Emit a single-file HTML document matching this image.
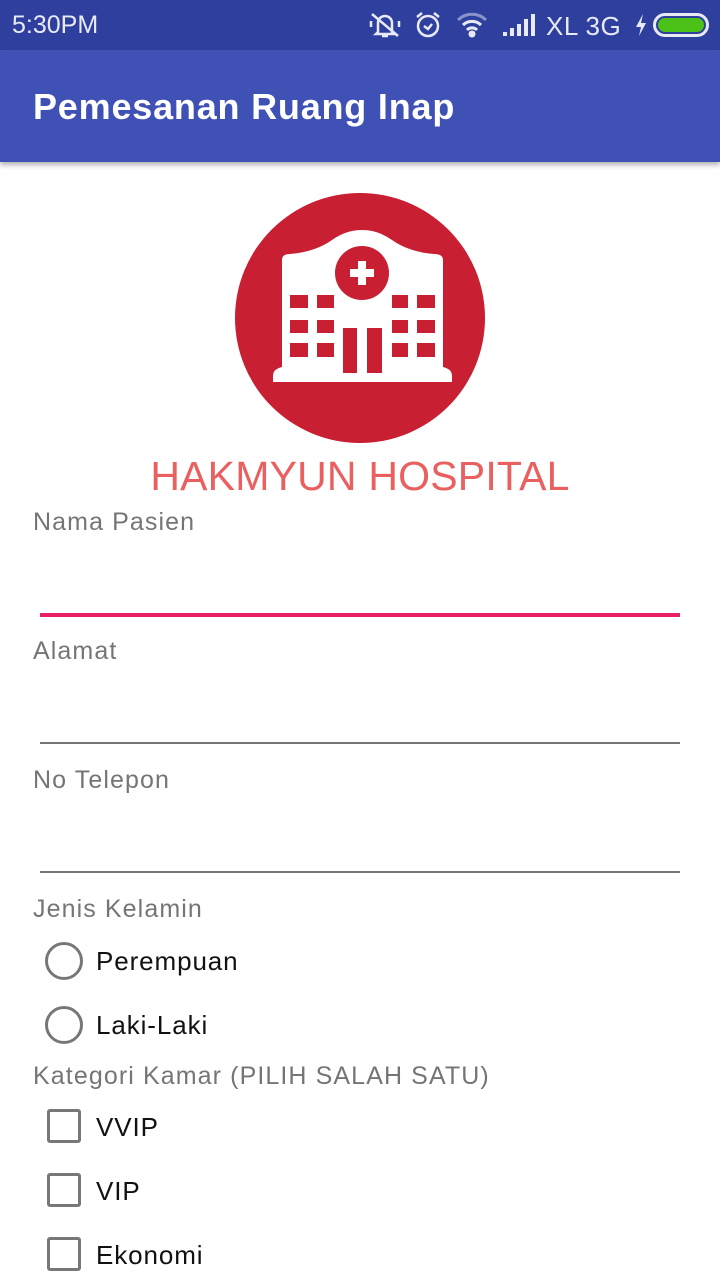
<!DOCTYPE html>
<html><head><meta charset="utf-8"><style>
*{margin:0;padding:0;box-sizing:border-box}
body{width:720px;height:1280px;background:#fff;font-family:"Liberation Sans",sans-serif;position:relative;overflow:hidden}
.abs{position:absolute}
.status{left:0;top:0;width:720px;height:50px;background:#2f3f9e;color:#e8eaf6}
.bar{left:0;top:50px;width:720px;height:112px;background:#3f51b5;box-shadow:0 3px 5px rgba(0,0,0,.3)}
.title{left:33px;top:86px;font-size:36px;color:#fff;font-weight:bold;letter-spacing:0.8px}
.lbl{left:33px;font-size:25px;color:#757575;letter-spacing:1.1px}
.line{left:40px;width:640px;height:2px;background:#777}
.opt{left:96px;font-size:26px;color:#111;letter-spacing:0.9px}
.radio{left:45px;width:38px;height:38px;border:3.5px solid #777;border-radius:50%}
.cb{left:47px;width:34px;height:34px;border:3.5px solid #777;border-radius:3px}
</style></head><body>
<div class="abs status">
<div class="abs" style="left:12px;top:11px;font-size:25px;color:#e8eaf6">5:30PM</div>
<svg class="abs" style="left:368px;top:10px" width="34" height="30" viewBox="0 0 34 30" fill="none" stroke="#e8eaf6" stroke-width="2.5"><path d="M10 22V13a7 7 0 0 1 14 0v9l2 2H8z"/><path d="M14 26h6"/><path d="M4 4l26 22"/><path d="M3 11v6M31 11v6"/></svg>
<svg class="abs" style="left:413px;top:10px" width="30" height="30" viewBox="0 0 30 30" fill="none" stroke="#e8eaf6" stroke-width="2.5"><circle cx="15" cy="16" r="10"/><path d="M11 16l4 3 4-5M4 7l5-4M26 7l-5-4"/></svg>
<svg class="abs" style="left:455px;top:12px" width="34" height="26" viewBox="0 0 34 26" fill="none" stroke="#e8eaf6" stroke-width="3"><path d="M3 8a20 20 0 0 1 28 0" opacity=".5"/><path d="M8 13a13 13 0 0 1 18 0"/><path d="M12 18a7 7 0 0 1 10 0"/><circle cx="17" cy="22" r="2" fill="#e8eaf6"/></svg>
<svg class="abs" style="left:502px;top:13px" width="34" height="24" viewBox="0 0 34 24" fill="#e8eaf6"><rect x="1" y="19" width="4" height="4"/><rect x="8" y="15" width="4" height="8"/><rect x="15" y="11" width="4" height="12"/><rect x="22" y="6" width="4" height="17"/><rect x="29" y="1" width="4" height="22"/></svg>
<div class="abs" style="left:546px;top:11px;font-size:26px;letter-spacing:0.5px">XL 3G</div>
<svg class="abs" style="left:634px;top:13px" width="14" height="24" viewBox="0 0 14 24" fill="#e8eaf6"><path d="M9 1L2 14h5l-2 9 7-13H7z"/></svg>
<div class="abs" style="left:653px;top:13px;width:56px;height:24px;border:3px solid #e8eaf6;border-radius:12px;padding:2px"><div style="width:100%;height:100%;background:#4cc219;border-radius:8px"></div></div>
</div>
<div class="abs bar"></div>
<div class="abs title">Pemesanan Ruang Inap</div>

<svg class="abs" style="left:0;top:0" width="720" height="460">
<circle cx="360" cy="318" r="125" fill="#c91f32"/>
<path d="M282 260 Q282 254 290 254 Q315 252 332 240 Q346 230 362 230 Q378 230 392 240 Q409 252 434 254 Q443 254 443 260 V367 Q452 369 452 376 V382 H273 V376 Q273 369 282 367 Z" fill="#fff"/>
<circle cx="362" cy="273" r="27" fill="#c91f32"/>
<rect x="358" y="261" width="8" height="24" fill="#fff"/><rect x="350" y="269" width="24" height="8" fill="#fff"/>
<g fill="#c91f32">
<rect x="290" y="295" width="18" height="13"/><rect x="317" y="295" width="17" height="13"/><rect x="392" y="295" width="16" height="13"/><rect x="417" y="295" width="18" height="13"/>
<rect x="290" y="320" width="18" height="13"/><rect x="317" y="320" width="17" height="13"/><rect x="392" y="320" width="16" height="13"/><rect x="417" y="320" width="18" height="13"/>
<rect x="290" y="343" width="18" height="14"/><rect x="317" y="343" width="17" height="14"/><rect x="392" y="343" width="16" height="14"/><rect x="417" y="343" width="18" height="14"/>
<rect x="343" y="328" width="14" height="45"/><rect x="367" y="328" width="15" height="45"/>
</g>
</svg>
<div class="abs" style="left:0;width:720px;top:453px;text-align:center;font-size:41px;color:#ea5f5f;letter-spacing:0.2px">HAKMYUN HOSPITAL</div>

<div class="abs lbl" style="top:508px">Nama Pasien</div>
<div class="abs line" style="top:613px;height:4px;background:#e91e63"></div>
<div class="abs lbl" style="top:637px">Alamat</div>
<div class="abs line" style="top:742px"></div>
<div class="abs lbl" style="top:766px">No Telepon</div>
<div class="abs line" style="top:871px"></div>
<div class="abs lbl" style="top:895px">Jenis Kelamin</div>
<div class="abs radio" style="top:942px"></div><div class="abs opt" style="top:946px">Perempuan</div>
<div class="abs radio" style="top:1006px"></div><div class="abs opt" style="top:1010px">Laki-Laki</div>
<div class="abs lbl" style="top:1062px">Kategori Kamar (PILIH SALAH SATU)</div>
<div class="abs cb" style="top:1109px"></div><div class="abs opt" style="top:1112px">VVIP</div>
<div class="abs cb" style="top:1173px"></div><div class="abs opt" style="top:1176px">VIP</div>
<div class="abs cb" style="top:1237px"></div><div class="abs opt" style="top:1240px">Ekonomi</div>
</body></html>
